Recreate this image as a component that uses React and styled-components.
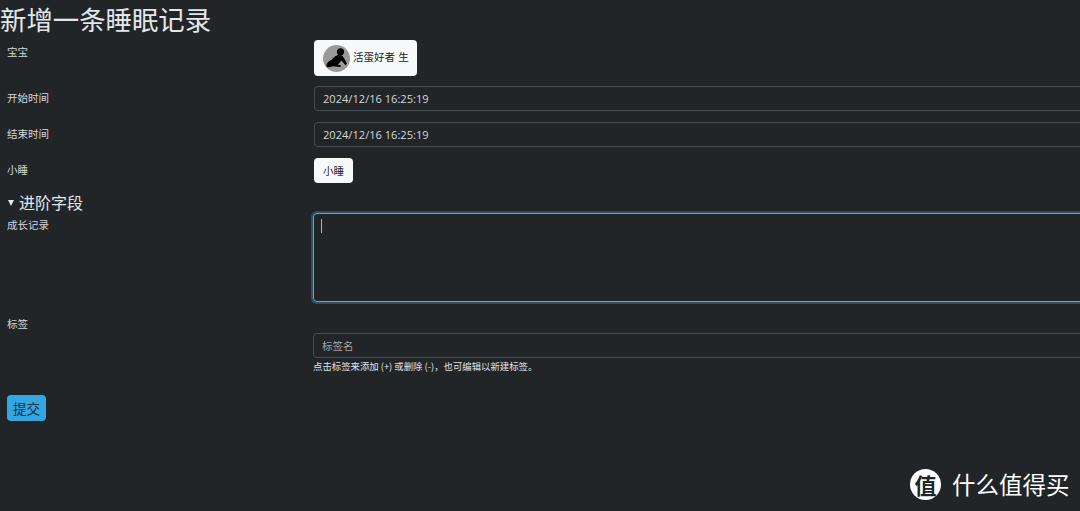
import React from "react";
import styled, { createGlobalStyle } from "styled-components";

const Global = createGlobalStyle`
  html, body { margin: 0; padding: 0; height: 100%; background: #212528; overflow: hidden; }
  body { font-family: "Open Sans", "Noto Sans CJK SC", sans-serif; color: #dee2e6; }
`;
const Page = styled.div`
  position: relative;
  width: 1080px;
  height: 511px;
  overflow: hidden;
  background: #212528;
`;
const Title = styled.h1`
  margin: 0;
  height: 40px;
  font: 400 26.4px/37px "Noto Sans CJK SC", sans-serif;
  color: #e4e7ea;
`;
const Row = styled.div`
  display: grid;
  grid-template-columns: 307px 800px;
  height: ${p => p.$h}px;
  margin-bottom: ${p => p.$mb || 0}px;
  padding-left: 7px;
  box-sizing: border-box;
`;
const Label = styled.label`
  font: 400 10.5px/14px "Noto Sans CJK SC", sans-serif;
  color: #d5d8db;
  margin-top: ${p => p.$top}px;
`;
const ButtonCell = styled.div`
  display: flex;
  align-items: flex-start;
`;
const WhiteButton = styled.button`
  display: flex;
  align-items: center;
  gap: 3px;
  justify-content: flex-start;
  box-sizing: border-box;
  height: ${p => p.$h}px;
  width: ${p => p.$w}px;
  padding: 0 0 0 ${p => p.$pl}px;
  border: none;
  border-radius: 4px;
  background: #f8f9fa;
  color: #1c1e20;
  font: 400 10.5px/14px "Noto Sans CJK SC", sans-serif;
  white-space: nowrap;
`;
const ButtonText = styled.span`
  margin-top: -2px;
  word-spacing: 1px;
`;
const Avatar = styled.svg`
  width: 27px;
  height: 27px;
  flex: none;
`;
const Field = styled.div`
  box-sizing: border-box;
  height: 25px;
  width: 790px;
  margin-left: ${p => p.$ml || 0}px;
  padding: 0 8px;
  display: flex;
  align-items: center;
  border: 1px solid #454c53;
  border-radius: 4px;
  font: 400 ${p => p.$fs || 11.1}px/14px ${p => p.$cjk ? '"Noto Sans CJK SC"' : '"Open Sans"'}, sans-serif;
  color: ${p => p.$muted ? "#a2a7ac" : "#d5d8db"};
`;
const TextArea = styled.div`
  box-sizing: border-box;
  width: 790px;
  height: 89px;
  margin-left: -1px;
  padding: 5px 7px;
  border: 1px solid #6fa6c8;
  border-radius: 4px;
  box-shadow: 0 0 0 2px rgba(60, 120, 160, 0.5);
`;
const Caret = styled.div`
  width: 1px;
  height: 14px;
  background: #aeb3b7;
`;
const Summary = styled.div`
  display: flex;
  align-items: center;
  gap: 5px;
  height: 30px;
  padding: 8px 0 0 8px;
  box-sizing: border-box;
  font: 400 16px/22px "Noto Sans CJK SC", sans-serif;
  color: #e4e7ea;
`;
const Triangle = styled.span`
  width: 0;
  height: 0;
  margin-top: 2px;
  border-left: 3px solid transparent;
  border-right: 3px solid transparent;
  border-top: 6px solid #e4e7ea;
`;
const Help = styled.div`
  margin-left: -1px;
  margin-top: 1px;
  font: 400 9.4px/14px "Noto Sans CJK SC", sans-serif;
  color: #e0e3e6;
  white-space: nowrap;
`;
const Submit = styled.button`
  display: block;
  margin: 23px 0 0 7px;
  width: 39px;
  height: 26px;
  padding: 0;
  border: none;
  border-radius: 4px;
  background: #33a7e4;
  color: #12303f;
  font: 400 13.5px/26px "Noto Sans CJK SC", sans-serif;
`;
const Watermark = styled.div`
  position: absolute;
  left: 910px;
  top: 468px;
  display: flex;
  align-items: center;
  gap: 11px;
  color: #fff;
  font: 400 23.5px/32px "Noto Sans CJK SC", sans-serif;
`;
const Badge = styled.span`
  width: 31px;
  height: 31px;
  border-radius: 50%;
  background: #fff;
  color: #212528;
  display: flex;
  align-items: center;
  justify-content: center;
  font: 700 22px/31px "Noto Sans CJK SC", sans-serif;
`;

const BabyIcon = () => (
  <Avatar viewBox="0 0 27 27">
    <circle cx="13.5" cy="13.5" r="13.5" fill="#9a9a9a" />
    <circle cx="17.5" cy="6.8" r="3.6" fill="#000" />
    <path d="M3.5 21.5C3 18.5 5.5 16 8.5 15C10.5 12.5 12.5 10.5 15 10L19 10.5C21 12.5 22.5 15.5 24 19L22.3 20C20.8 18.3 19.5 16.5 18.3 15.5C17.3 17.5 16 18.5 14.5 19.3L18 20.5L17.5 22L9.5 21.2C7.5 22 4 23 3.5 21.5Z" fill="#000" />
  </Avatar>
);

export default function App() {
  return (
    <Page>
      <Global />
      <Title>新增一条睡眠记录</Title>
      <Row $h={36} $mb={10}>
        <Label $top={5}>宝宝</Label>
        <ButtonCell>
          <WhiteButton $h={36} $w={103} $pl={9}>
            <BabyIcon />
            <ButtonText>活蛋好者 生</ButtonText>
          </WhiteButton>
        </ButtonCell>
      </Row>
      <Row $h={25} $mb={11}>
        <Label $top={5}>开始时间</Label>
        <Field>2024/12/16 16:25:19</Field>
      </Row>
      <Row $h={25} $mb={11}>
        <Label $top={5}>结束时间</Label>
        <Field>2024/12/16 16:25:19</Field>
      </Row>
      <Row $h={25}>
        <Label $top={5}>小睡</Label>
        <ButtonCell>
          <WhiteButton $h={25} $w={39} $pl={9}>小睡</WhiteButton>
        </ButtonCell>
      </Row>
      <Summary>
        <Triangle />
        进阶字段
      </Summary>
      <Row $h={89} $mb={31}>
        <Label $top={5}>成长记录</Label>
        <TextArea><Caret /></TextArea>
      </Row>
      <Row $h={39}>
        <Label $top={-16}>标签</Label>
        <div>
          <Field $ml={-1} $cjk $muted $fs={10.5}>标签名</Field>
          <Help>点击标签来添加 (+) 或删除 (-)，也可编辑以新建标签。</Help>
        </div>
      </Row>
      <Submit>提交</Submit>
      <Watermark>
        <Badge>值</Badge>
        什么值得买
      </Watermark>
    </Page>
  );
}
